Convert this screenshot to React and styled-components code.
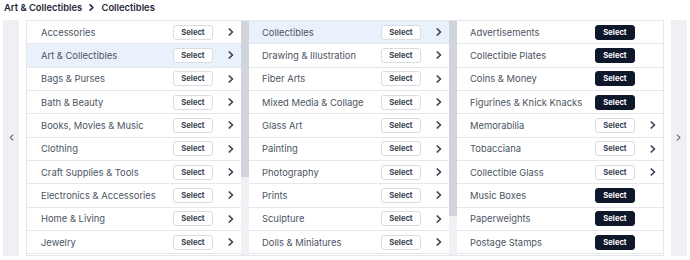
import styled, { createGlobalStyle } from "styled-components";

const GlobalStyle = createGlobalStyle`
  html, body {
    margin: 0;
    background: #ffffff;
    font-family: Inter, "Noto Sans", sans-serif;
  }
`;

const VISIBLE_ROWS = 10;

const Page = styled.div`
  width: 690px;
  height: 260px;
  box-sizing: border-box;
  padding: 1px 3px 0 3px;
  overflow: hidden;
`;

const Breadcrumb = styled.div`
  display: flex;
  align-items: center;
  gap: 7px;
  height: 13px;
  margin: 0 0 6px 1px;
  font-size: 9.4px;
  font-weight: 600;
  color: #1f2937;
`;

const Browser = styled.div`
  display: flex;
  gap: 7px;
`;

const NavBar = styled.div`
  width: 16px;
  flex: none;
  background: #eff0f3;
  display: flex;
  align-items: center;
  justify-content: center;
  color: #6b7280;
`;

const Columns = styled.div`
  flex: 1;
  display: grid;
  grid-template-columns: 222px 208px 1fr;
  border: 1px solid #e5e7eb;
  height: 233.5px;
`;

const Column = styled.div`
  display: flex;
  min-width: 0;
  height: 233.5px;
`;

const List = styled.div`
  flex: 1;
  min-width: 0;
  overflow: hidden;
`;

const ScrollTrack = styled.div`
  width: 8px;
  flex: none;
  background: #f0f1f4;
`;

const ScrollThumb = styled.div`
  background: #d1d5db;
`;

const Row = styled.div`
  display: flex;
  align-items: center;
  height: 23.33px;
  box-sizing: border-box;
  padding-left: ${(p) => p.$indent}px;
  border-bottom: 1px solid #e5e7eb;
  background: ${(p) => (p.$active ? "#e9f1fd" : "#ffffff")};
`;

const Label = styled.span`
  flex: 1;
  font-size: 9.4px;
  color: #4b5563;
  white-space: nowrap;
`;

const SelectButton = styled.button`
  width: 40px;
  height: 15px;
  padding: 0;
  box-sizing: border-box;
  border-radius: 3px;
  border: 1px solid ${(p) => (p.$dark ? "#0f172a" : "#d9dce1")};
  background: ${(p) => (p.$dark ? "#0f172a" : "#ffffff")};
  color: ${(p) => (p.$dark ? "#ffffff" : "#374151")};
  font-family: Inter, sans-serif;
  font-size: 7.6px;
  font-weight: 700;
  line-height: 13px;
`;

const ChevronSlot = styled.span`
  width: 20px;
  margin-left: 8px;
  display: flex;
  justify-content: center;
  color: #374151;
`;

const Chevron = ({ size = 8, weight = 1.7 }) => (
  <svg width={size * 0.75} height={size} viewBox="0 0 6 8" fill="none">
    <polyline
      points="1.3,1 4.5,4 1.3,7"
      stroke="currentColor"
      strokeWidth={weight}
      strokeLinecap="round"
      strokeLinejoin="round"
    />
  </svg>
);

const ChevronLeft = () => (
  <svg width="5" height="7" viewBox="0 0 6 8" fill="none">
    <polyline
      points="4.5,1 1.5,4 4.5,7"
      stroke="currentColor"
      strokeWidth="1.3"
      strokeLinecap="round"
      strokeLinejoin="round"
    />
  </svg>
);

const categories = [
  "Accessories",
  "Art & Collectibles",
  "Bags & Purses",
  "Bath & Beauty",
  "Books, Movies & Music",
  "Clothing",
  "Craft Supplies & Tools",
  "Electronics & Accessories",
  "Home & Living",
  "Jewelry",
  "Paper & Party Supplies",
  "Pet Supplies",
  "Shoes",
  "Toys & Games",
  "Weddings",
].map((name) => ({ name, leaf: false }));

const artCategories = [
  "Collectibles",
  "Drawing & Illustration",
  "Fiber Arts",
  "Mixed Media & Collage",
  "Glass Art",
  "Painting",
  "Photography",
  "Prints",
  "Sculpture",
  "Dolls & Miniatures",
  "Artist Trading Cards",
  "Fine Art Ceramics",
].map((name) => ({ name, leaf: false }));

const collectibles = [
  { name: "Advertisements", leaf: true },
  { name: "Collectible Plates", leaf: true },
  { name: "Coins & Money", leaf: true },
  { name: "Figurines & Knick Knacks", leaf: true },
  { name: "Memorabilia", leaf: false },
  { name: "Tobacciana", leaf: false },
  { name: "Collectible Glass", leaf: false },
  { name: "Music Boxes", leaf: true },
  { name: "Paperweights", leaf: true },
  { name: "Postage Stamps", leaf: true },
];

const CategoryRow = ({ name, active, leaf, indent }) => (
  <Row $active={active} $indent={indent}>
    <Label>{name}</Label>
    <SelectButton $dark={leaf}>Select</SelectButton>
    <ChevronSlot>{!leaf && <Chevron />}</ChevronSlot>
  </Row>
);

const CategoryColumn = ({ items, active, indent }) => {
  const scrolls = items.length > VISIBLE_ROWS;
  const thumb = (VISIBLE_ROWS / items.length) * 100;
  return (
    <Column>
      <List>
        {items.slice(0, VISIBLE_ROWS).map((c) => (
          <CategoryRow
            key={c.name}
            name={c.name}
            leaf={c.leaf}
            indent={indent}
            active={c.name === active}
          />
        ))}
      </List>
      {scrolls && (
        <ScrollTrack>
          <ScrollThumb style={{ height: `${thumb}%` }} />
        </ScrollTrack>
      )}
    </Column>
  );
};

export default function App() {
  return (
    <Page>
      <GlobalStyle />
      <Breadcrumb>
        <span>Art &amp; Collectibles</span>
        <Chevron size={7} weight={1.8} />
        <span>Collectibles</span>
      </Breadcrumb>
      <Browser>
        <NavBar>
          <ChevronLeft />
        </NavBar>
        <Columns>
          <CategoryColumn items={categories} indent={14} active="Art & Collectibles" />
          <CategoryColumn items={artCategories} indent={13} active="Collectibles" />
          <CategoryColumn items={collectibles} indent={13} />
        </Columns>
        <NavBar>
          <Chevron size={7} weight={1.3} />
        </NavBar>
      </Browser>
    </Page>
  );
}
